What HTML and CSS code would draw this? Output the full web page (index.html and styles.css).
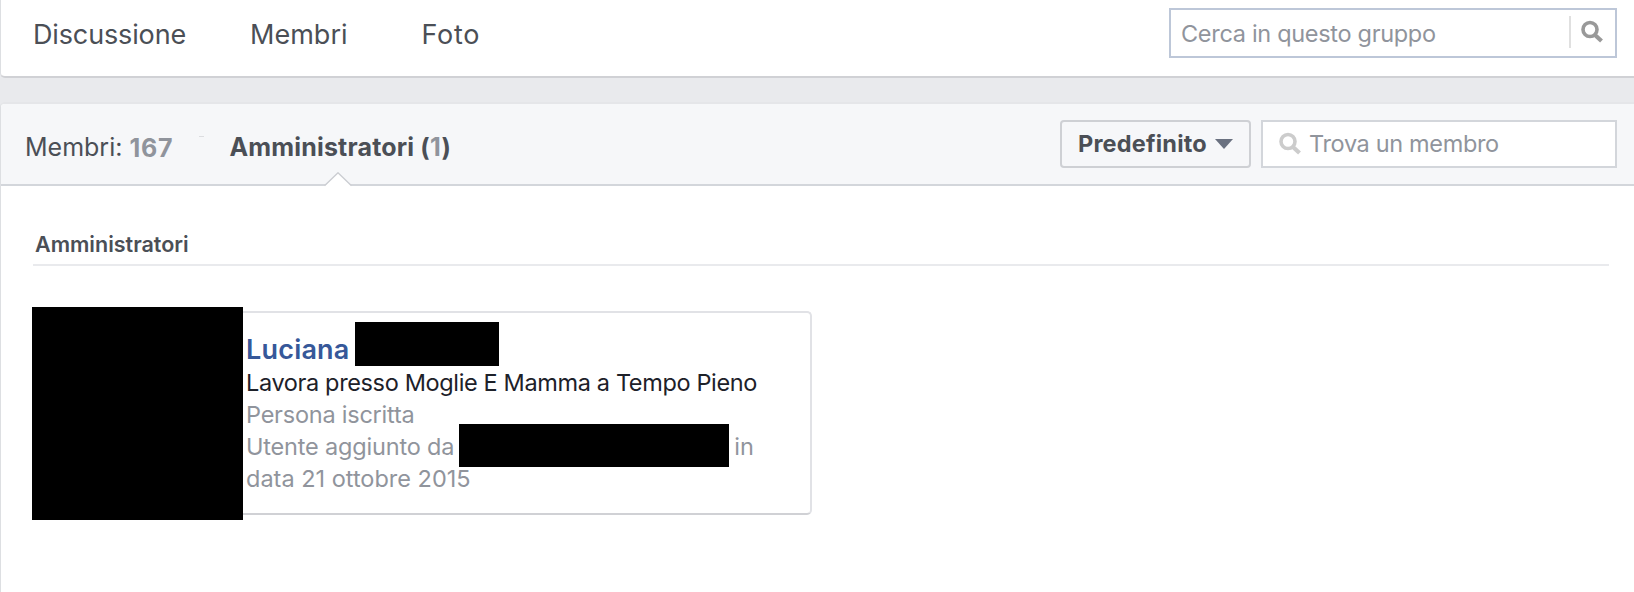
FILE: index.html
```html
<!DOCTYPE html>
<html lang="it">
<head>
  <meta charset="UTF-8">
  <meta name="viewport" content="width=device-width, initial-scale=1.0">
  <title>Membri del gruppo</title>
  <link rel="stylesheet" href="styles.css">
</head>
<body>
  <div class="group-nav">
    <div class="nav-links">
      <a class="nav-discussion">Discussione</a>
      <a class="nav-members">Membri</a>
      <a class="nav-photos">Foto</a>
    </div>
    <div class="group-search">
      <span class="search-text">Cerca in questo gruppo</span>
      <span class="search-button">
        <svg width="24" height="24" viewBox="0 0 24 24"><circle cx="10" cy="9.5" r="7" fill="none" stroke="#999" stroke-width="3.6"/><path d="M15 15l6.5 6" stroke="#999" stroke-width="4.2"/></svg>
      </span>
    </div>
  </div>

  <div class="panel">
    <div class="toolbar">
      <div class="tabs">
        <a class="tab-members">Membri: <b class="total">167</b></a>
        <span class="tab-mark"></span>
        <a class="tab-admins"><b>Amministratori (<span class="count">1</span>)</b>
          <svg class="notch" width="28" height="15" viewBox="0 0 28 15"><path d="M0 15V14L1 13.5 14 1 27 13.5 28 14V15Z" fill="#fff"/><path d="M0.5 13.8L14 0.8 27.5 13.8" fill="none" stroke="#cbcdd2" stroke-width="1.4"/></svg>
        </a>
      </div>
      <div class="filters">
        <div class="sort">
          <span class="sort-text">Predefinito</span>
          <span class="caret"></span>
        </div>
        <div class="member-search">
          <svg width="24" height="24" viewBox="0 0 24 24"><circle cx="10" cy="9.5" r="7" fill="none" stroke="#ccc" stroke-width="3.6"/><path d="M15 15l6.5 6" stroke="#ccc" stroke-width="4.2"/></svg>
          <span class="find-text">Trova un membro</span>
        </div>
      </div>
    </div>

    <h2 class="section-title">Amministratori</h2>

    <div class="member">
      <div class="photo"></div>
      <div class="member-info">
        <div class="name">Luciana<span class="hidden-name"></span></div>
        <div class="job">Lavora presso Moglie E Mamma a Tempo Pieno</div>
        <div class="joined">Persona iscritta</div>
        <div class="added"><span class="added-by">Utente aggiunto da</span><span class="hidden-user"></span>in</div>
        <div>data 21 ottobre 2015</div>
      </div>
    </div>
  </div>
</body>
</html>
```
FILE: styles.css
```css
* {
  box-sizing: border-box;
}
body {
  margin: 0;
  height: 592px;
  overflow: hidden;
  display: flex;
  flex-direction: column;
  gap: 24px;
  background: #e9eaed;
  color: #4b4f56;
  font-family: Inter, "Liberation Sans", sans-serif;
}
.group-nav {
  display: flex;
  justify-content: space-between;
  height: 78px;
  padding: 8px 17px 0 32px;
  background: #fff;
  border-left: 1px solid #dddfe2;
  border-bottom: 2px solid #d0d1d5;
  border-bottom-left-radius: 5px;
}
.nav-links {
  display: flex;
  line-height: 53px;
  font-size: 27px;
}
.nav-discussion {
  margin-right: 64px;
  letter-spacing: -0.14px;
}
.nav-members {
  margin-right: 74px;
}
.nav-photos {
  letter-spacing: 0.7px;
}
.group-search {
  display: flex;
  align-items: center;
  justify-content: space-between;
  width: 448px;
  height: 50px;
  padding: 0 11px 0 10px;
  border: 2px solid #bdc7d8;
  color: #90949c;
  font-size: 23.5px;
}
.search-text {
  letter-spacing: -0.31px;
}
.search-button {
  display: flex;
  height: 32px;
  padding: 4px 0 0 9px;
  margin-top: -2px;
  border-left: 2px solid #e0e0e0;
}
.panel {
  flex: 1;
  background: #fff;
  border-left: 1px solid #dddfe2;
  border-top: 2px solid #e5e6e9;
  border-top-left-radius: 5px;
}
.toolbar {
  display: flex;
  justify-content: space-between;
  height: 82px;
  padding: 16px 17px 0 24px;
  background: #f6f7f9;
  border-bottom: 2px solid #d3d6db;
  border-top-left-radius: 4px;
}
.tabs {
  display: flex;
  line-height: 54px;
  font-size: 25px;
}
.count,
.total {
  color: #90949c;
}
.total {
  position: relative;
  top: 1px;
  letter-spacing: 0.8px;
}
.tab-mark {
  width: 5px;
  height: 1px;
  margin: 16px 25px 0 26px;
  background: #dcdde0;
}
.tab-admins {
  position: relative;
  letter-spacing: 0.18px;
}
.notch {
  position: absolute;
  left: 95px;
  top: 52px;
}
.filters {
  display: flex;
  gap: 10px;
}
.sort,
.member-search {
  display: flex;
  align-items: center;
  height: 48px;
  font-size: 23.5px;
}
.sort {
  width: 191px;
  padding-left: 16px;
  border: 2px solid #ced0d4;
  border-radius: 4px;
  font-weight: 700;
  letter-spacing: 0.2px;
}
.sort-text,
.find-text {
  padding-bottom: 2px;
}
.caret {
  margin-left: 8px;
  border: 9px solid transparent;
  border-top: 10px solid #6a7180;
  border-bottom: 0;
}
.member-search {
  width: 356px;
  padding-left: 15px;
  gap: 7px;
  background: #fff;
  border: 2px solid #d3d6db;
  color: #90949c;
}
.find-text {
  letter-spacing: -0.35px;
}
.section-title {
  margin: 42px 25px 0 32px;
  padding-left: 2px;
  height: 38px;
  border-bottom: 2px solid #e9eaed;
  font-size: 21.5px;
  font-weight: 600;
  line-height: 32px;
}
.member {
  display: flex;
  width: 779px;
  height: 204px;
  margin: 45px 0 0 32px;
  border: 2px solid #e1e2e6;
  border-bottom-color: #d0d1d5;
  border-radius: 5px;
}
.photo {
  width: 211px;
  height: 213px;
  margin: -6px 0 0 -3px;
  background: #000;
}
.member-info {
  padding: 20px 0 0 3px;
  color: #90949c;
  font-size: 23.5px;
  line-height: 32px;
}
.name,
.added {
  display: flex;
}
.name {
  height: 34px;
  color: #365899;
  font-size: 27px;
  font-weight: 600;
  line-height: 34px;
  letter-spacing: 0.2px;
}
.hidden-name {
  width: 144px;
  height: 44px;
  margin: -11px 0 0 5px;
  background: #000;
}
.job {
  color: #1d2129;
  letter-spacing: -0.36px;
}
.joined {
  letter-spacing: -0.23px;
}
.added {
  height: 32px;
}
.added-by {
  letter-spacing: -0.18px;
}
.hidden-user {
  width: 270px;
  height: 43px;
  margin: -7px 5px 0 5px;
  background: #000;
}
```
